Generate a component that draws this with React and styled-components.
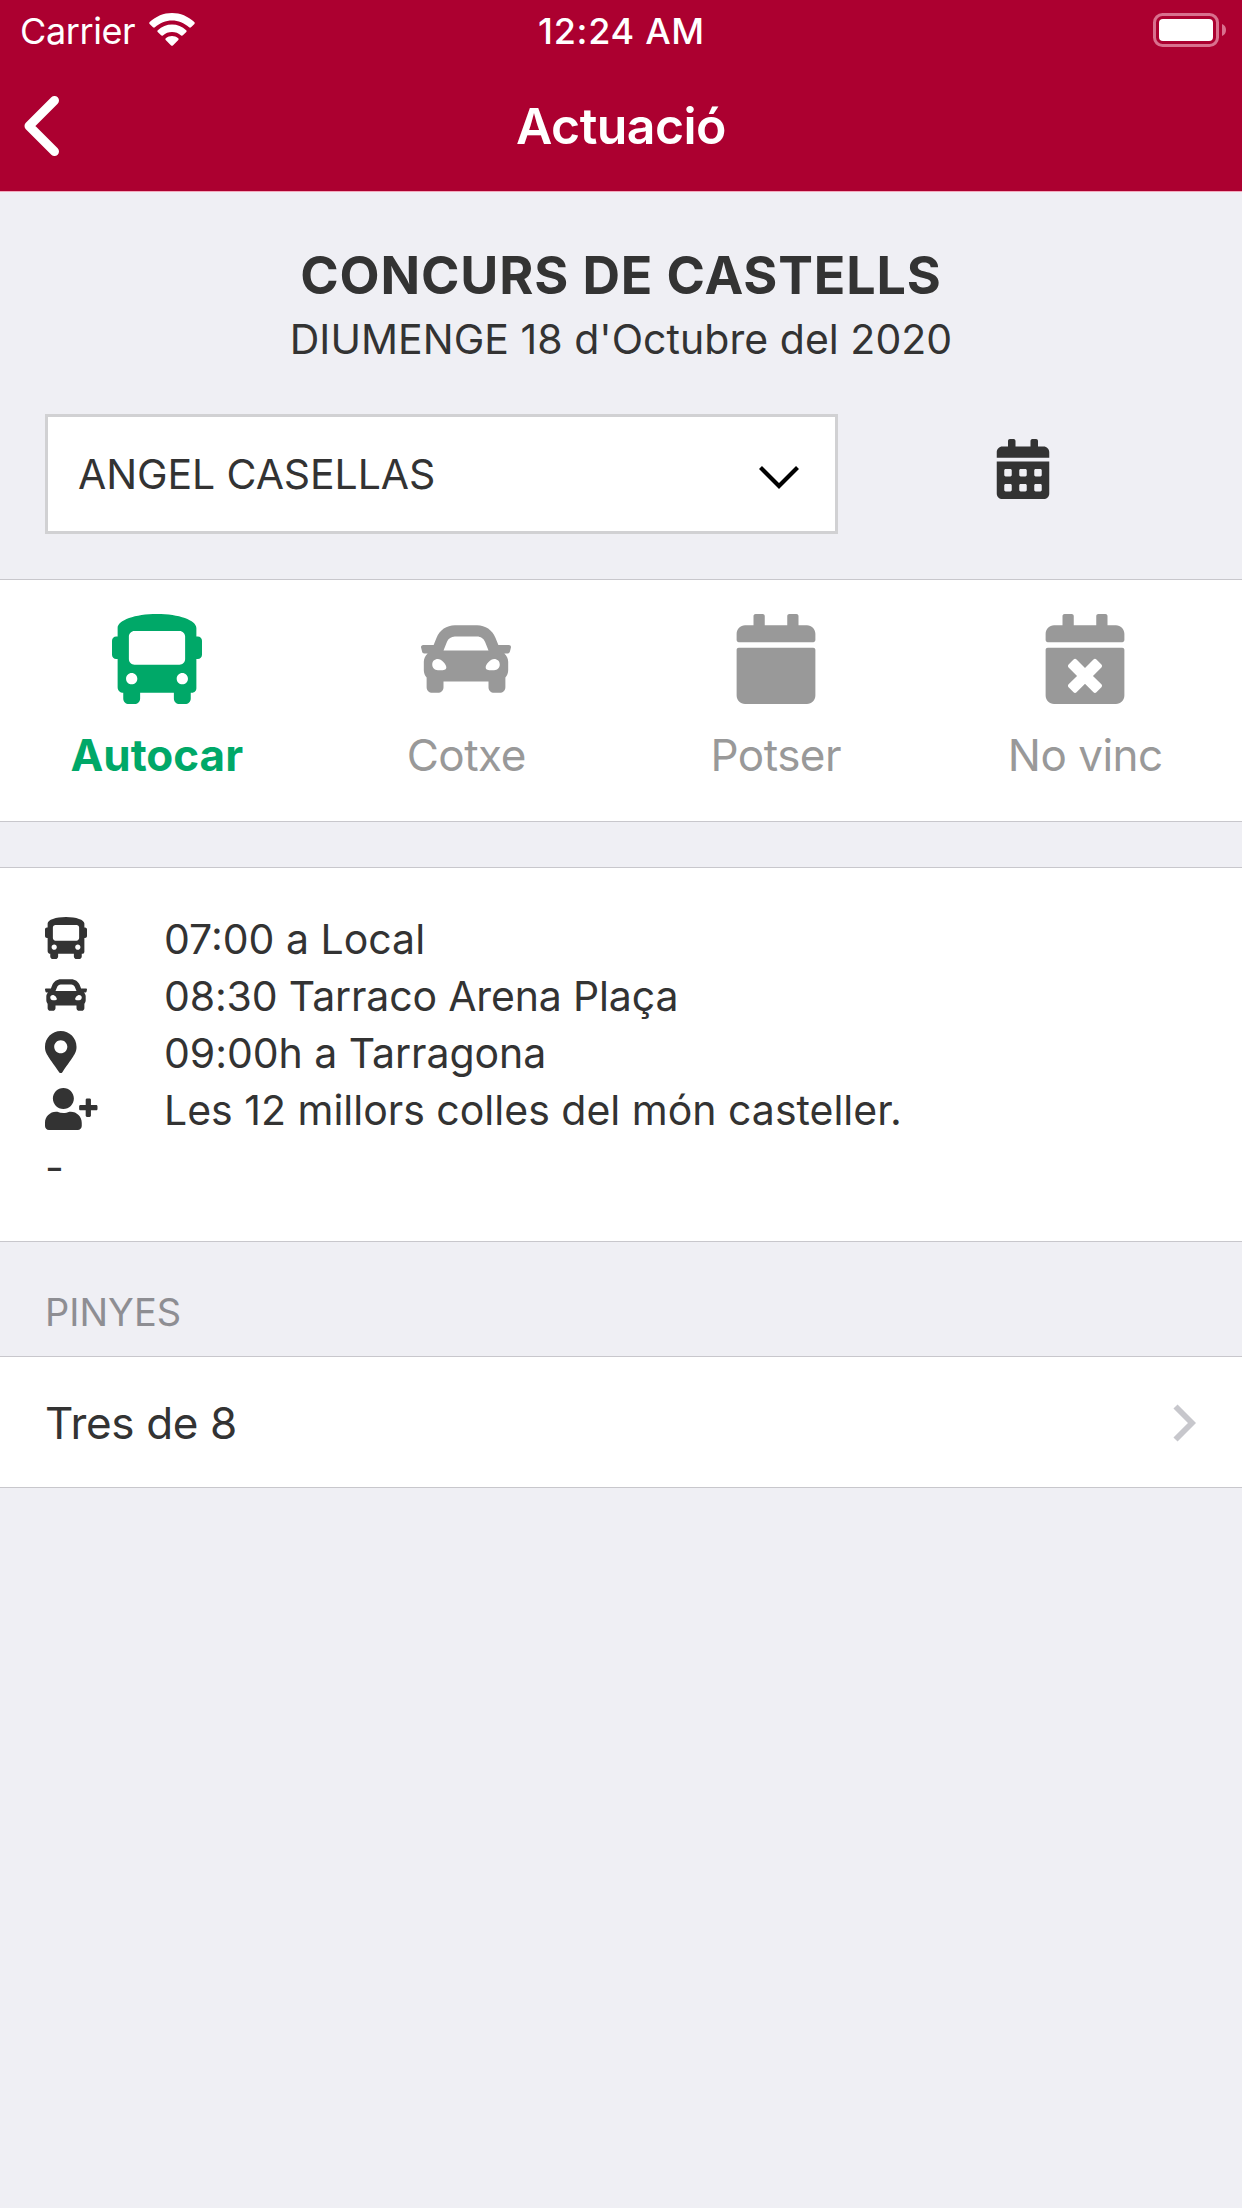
import { useState } from "react";
import styled, { createGlobalStyle } from "styled-components";
import {
  FaBus,
  FaCalendar,
  FaCalendarAlt,
  FaCalendarTimes,
  FaCar,
  FaMapMarkerAlt,
  FaUserPlus,
} from "react-icons/fa";

const GlobalStyle = createGlobalStyle`
  * {
    box-sizing: border-box;
  }

  body {
    margin: 0;
    background: #efeff4;
    color: #333333;
    font-family: Inter, "Liberation Sans", sans-serif;
    font-size: 41px;
  }

  svg {
    display: block;
    flex-shrink: 0;
  }
`;

const OPTIONS = [
  { id: "bus", label: "Autocar", Icon: FaBus },
  { id: "car", label: "Cotxe", Icon: FaCar },
  { id: "maybe", label: "Potser", Icon: FaCalendar },
  { id: "no", label: "No vinc", Icon: FaCalendarTimes },
];

const DETAILS = [
  { id: 1, text: "07:00 a Local", Icon: FaBus },
  { id: 2, text: "08:30 Tarraco Arena Plaça", Icon: FaCar, spacing: -0.15 },
  {
    id: 3,
    text: "09:00h a Tarragona",
    Icon: FaMapMarkerAlt,
    iconWidth: 31.5,
    spacing: -0.05,
  },
  {
    id: 4,
    text: "Les 12 millors colles del món casteller.",
    Icon: FaUserPlus,
    iconWidth: 52.5,
  },
];

const Page = styled.div`
  width: 1242px;
  min-height: 2208px;
  background: #efeff4;
`;

const Header = styled.header`
  height: 192px;
  background: #ac0030;
  border-bottom: 1px solid #f3a9bd;
  color: #ffffff;
`;

const StatusBar = styled.div`
  display: grid;
  grid-template-columns: 1fr auto 1fr;
  height: 62px;
  padding: 0 16px 0 20px;
  font-size: 36px;
  line-height: 62px;
`;

const Carrier = styled.div`
  display: flex;
  align-items: flex-start;
  gap: 14px;
  letter-spacing: -0.4px;

  svg {
    margin-top: 13px;
  }
`;

const Time = styled.div`
  padding-right: 3px;
  font-weight: 500;
  letter-spacing: 0.7px;
`;

const Battery = styled.div`
  display: flex;
  justify-content: flex-end;
  padding-top: 13px;
`;

const NavBar = styled.div`
  display: grid;
  grid-template-columns: 1fr auto 1fr;
  align-items: start;
  padding: 0 24px;
`;

const BackButton = styled.button`
  width: 36px;
  margin-top: 34px;
  padding: 0;
  border: 0;
  background: none;
  color: inherit;
`;

const NavTitle = styled.h1`
  margin: 0;
  font-size: 50px;
  font-weight: 600;
  letter-spacing: -0.56px;
  line-height: 128px;
`;

const EventHeader = styled.section`
  padding: 54px 45px 45px;
  text-align: center;
`;

const EventTitle = styled.h2`
  margin: 0;
  font-size: 52px;
  font-weight: 700;
  letter-spacing: 0.87px;
  line-height: 60px;
`;

const EventDate = styled.div`
  margin-top: 5px;
  letter-spacing: 0.04px;
  line-height: 57px;
`;

const FormRow = styled.div`
  display: flex;
  margin-top: 46px;
`;

const Select = styled.button`
  display: flex;
  align-items: center;
  justify-content: space-between;
  width: 793px;
  height: 120px;
  padding: 0 36px 0 30px;
  border: 3px solid #d1d1d3;
  background: #ffffff;
  color: inherit;
  font: inherit;
  letter-spacing: -0.09px;

  svg {
    margin-top: 7px;
  }
`;

const CalendarLink = styled.div`
  display: flex;
  flex: 1;
  justify-content: center;
  padding: 25px 0 0 10px;
`;

const Card = styled.section`
  border-top: 1px solid #c8c7cc;
  border-bottom: 1px solid #c8c7cc;
  background: #ffffff;
`;

const OptionsCard = styled(Card)`
  display: grid;
  grid-template-columns: repeat(4, 1fr);
  height: 243px;
  padding: 34px 2px 0;
`;

const Option = styled.button`
  display: flex;
  flex-direction: column;
  align-items: center;
  justify-content: flex-start;
  gap: 24px;
  padding: 0;
  border: 0;
  background: none;
  color: ${({ $active }) => ($active ? "#00a868" : "#999999")};
  font: inherit;
  font-size: 44px;
  font-weight: ${({ $active }) => ($active ? 700 : 400)};
  letter-spacing: ${({ $active }) => ($active ? "0" : "-0.5px")};
  line-height: 54px;
`;

const DetailsCard = styled(Card)`
  height: 375px;
  margin-top: 45px;
  padding: 43px 45px 0;
`;

const DetailRow = styled.div`
  display: flex;
  height: 57px;
  line-height: 57px;
  letter-spacing: ${({ $spacing = 0 }) => $spacing}px;
`;

const DetailIcon = styled.div`
  width: 119px;
  padding-top: 6px;

  svg {
    width: ${({ $width = 42 }) => $width}px;
    height: 42px;
  }
`;

const SectionTitle = styled.div`
  height: 114px;
  padding: 45px 45px 0;
  color: #8e8e93;
  font-size: 38px;
  line-height: 50px;
`;

const ListItem = styled.div`
  display: flex;
  align-items: center;
  justify-content: space-between;
  height: 130px;
  padding: 1px 46px 0 45px;
  font-size: 44px;
  letter-spacing: -0.37px;
  line-height: 130px;
`;

const WifiIcon = () => (
  <svg width="46" height="34" viewBox="0 0 46 34" fill="#ffffff">
    <path d="M.7 9.1C7 3.2 14.6 0 23 0s16 3.200 22.300 9.100c.6.600.6 1.300.1 1.800L42 14.200c-.6.600-1.300.6-1.900.1C35.200 9.900 29.300 7.400 23 7.400S10.800 9.900 5.900 14.300c-.6.500-1.300.5-1.900-.1L.6 10.900c-.5-.5-.5-1.200.1-1.800z" />
    <path d="M8.800 17.200C12.800 13.600 17.700 11.600 23 11.600s10.200 2 14.200 5.600c.6.500.6 1.200.1 1.800l-3.400 3.300c-.5.500-1.200.5-1.800.1C29.500 20.200 26.400 19 23 19s-6.500 1.200-9.100 3.400c-.6.400-1.300.4-1.800-.1L8.700 19c-.5-.6-.5-1.300.1-1.800z" />
    <path d="M16.800 25.300c1.800-1.500 3.900-2.300 6.200-2.300s4.400.8 6.200 2.300c.6.500.6 1.200.1 1.700l-5.400 5.400c-.6.600-1.200.6-1.800 0L16.700 27c-.5-.5-.5-1.200.1-1.700z" />
  </svg>
);

const BatteryIcon = () => (
  <svg width="73" height="34" viewBox="0 0 73 34">
    <rect
      x="1.5"
      y="1.5"
      width="63"
      height="31"
      rx="8"
      fill="none"
      stroke="#d9708e"
      strokeWidth="3"
    />
    <rect x="6" y="6" width="54" height="22" rx="4" fill="#ffffff" />
    <path d="M69 11c2.600 1 4 3.300 4 6s-1.400 5-4 6z" fill="#d9708e" />
  </svg>
);

const BackIcon = () => (
  <svg width="36" height="60" viewBox="0 0 36 60">
    <path
      d="M30.500 4.500L5 30l25.500 25.500"
      fill="none"
      stroke="#ffffff"
      strokeWidth="9"
      strokeLinecap="round"
      strokeLinejoin="round"
    />
  </svg>
);

const SelectArrow = () => (
  <svg width="40" height="24" viewBox="0 0 40 24">
    <path
      d="M1.500 1.500L20 20l18.500-18.500"
      fill="none"
      stroke="#000000"
      strokeWidth="4.2"
    />
  </svg>
);

const DisclosureArrow = () => (
  <svg width="23" height="38" viewBox="0 0 23 38">
    <path
      d="M2.500 2.500L19 19 2.500 35.500"
      fill="none"
      stroke="#c7c7cc"
      strokeWidth="5.8"
    />
  </svg>
);

const TopHeader = () => (
  <Header>
    <StatusBar>
      <Carrier>
        Carrier
        <WifiIcon />
      </Carrier>
      <Time>12:24 AM</Time>
      <Battery>
        <BatteryIcon />
      </Battery>
    </StatusBar>
    <NavBar>
      <BackButton aria-label="Enrere">
        <BackIcon />
      </BackButton>
      <NavTitle>Actuació</NavTitle>
    </NavBar>
  </Header>
);

const App = () => {
  const [selected, setSelected] = useState("bus");

  return (
    <Page>
      <GlobalStyle />
      <TopHeader />

      <EventHeader>
        <EventTitle>CONCURS DE CASTELLS</EventTitle>
        <EventDate>DIUMENGE 18 d'Octubre del 2020</EventDate>
        <FormRow>
          <Select>
            ANGEL CASELLAS
            <SelectArrow />
          </Select>
          <CalendarLink>
            <FaCalendarAlt size={60} />
          </CalendarLink>
        </FormRow>
      </EventHeader>

      <OptionsCard>
        {OPTIONS.map(({ id, label, Icon }) => (
          <Option
            key={id}
            $active={id === selected}
            onClick={() => setSelected(id)}
          >
            <Icon size={90} />
            {label}
          </Option>
        ))}
      </OptionsCard>

      <DetailsCard>
        {DETAILS.map(({ id, text, Icon, iconWidth, spacing }) => (
          <DetailRow key={id} $spacing={spacing}>
            <DetailIcon $width={iconWidth}>
              <Icon />
            </DetailIcon>
            {text}
          </DetailRow>
        ))}
        <DetailRow>-</DetailRow>
      </DetailsCard>

      <SectionTitle>PINYES</SectionTitle>
      <Card>
        <ListItem>
          Tres de 8
          <DisclosureArrow />
        </ListItem>
      </Card>
    </Page>
  );
};

export default App;
